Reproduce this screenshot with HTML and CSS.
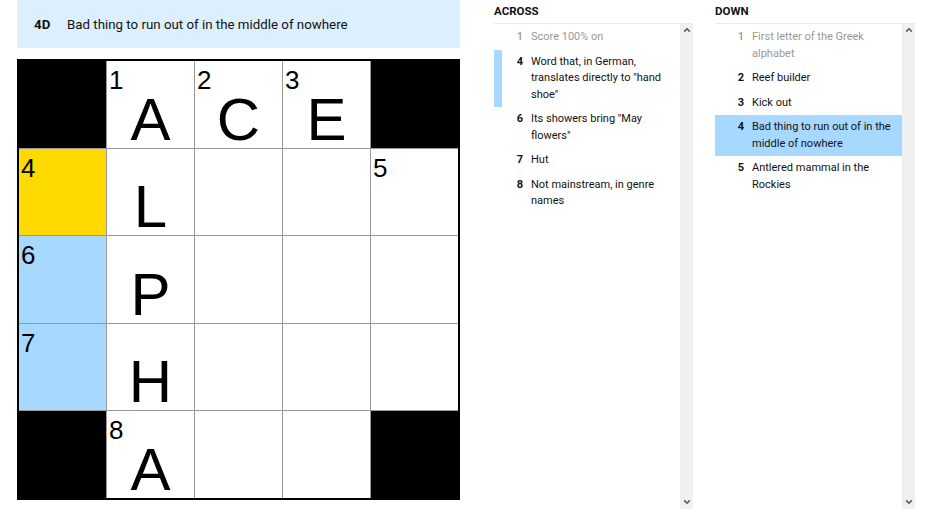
FILE: index.html
```html
<!DOCTYPE html>
<html>
<head>
<meta charset="utf-8">
<link rel="stylesheet" href="styles.css">
</head>
<body>
<div class="page">
  <div class="board">
    <div class="clue-bar">
      <span class="clue-bar-num">4D</span>
      <span class="clue-bar-text">Bad thing to run out of in the middle of nowhere</span>
    </div>
    <div class="grid">
      <div class="cell block"></div>
      <div class="cell"><span class="num">1</span><span class="letter">A</span></div>
      <div class="cell"><span class="num">2</span><span class="letter">C</span></div>
      <div class="cell"><span class="num">3</span><span class="letter">E</span></div>
      <div class="cell block"></div>

      <div class="cell selected"><span class="num">4</span></div>
      <div class="cell"><span class="letter">L</span></div>
      <div class="cell"></div>
      <div class="cell"></div>
      <div class="cell"><span class="num">5</span></div>

      <div class="cell word"><span class="num">6</span></div>
      <div class="cell"><span class="letter">P</span></div>
      <div class="cell"></div>
      <div class="cell"></div>
      <div class="cell"></div>

      <div class="cell word"><span class="num">7</span></div>
      <div class="cell"><span class="letter">H</span></div>
      <div class="cell"></div>
      <div class="cell"></div>
      <div class="cell"></div>

      <div class="cell block"></div>
      <div class="cell"><span class="num">8</span><span class="letter">A</span></div>
      <div class="cell"></div>
      <div class="cell"></div>
      <div class="cell block"></div>
    </div>
  </div>

  <div class="clues across">
    <div class="clues-title">ACROSS</div>
    <div class="clue-box">
      <ol class="clue-list">
        <li class="clue done"><span class="clue-num">1</span><span class="clue-text">Score 100% on</span></li>
        <li class="clue cross"><span class="clue-num">4</span><span class="clue-text">Word that, in German, translates directly to "hand shoe"</span></li>
        <li class="clue"><span class="clue-num">6</span><span class="clue-text">Its showers bring "May flowers"</span></li>
        <li class="clue"><span class="clue-num">7</span><span class="clue-text">Hut</span></li>
        <li class="clue"><span class="clue-num">8</span><span class="clue-text">Not mainstream, in genre names</span></li>
      </ol>
      <div class="scrollbar">
        <svg class="chev" width="8" height="6" viewBox="0 0 8 6"><path d="M1.2 4.6 L4 1.8 L6.8 4.6" fill="none" stroke="#5a5a5a" stroke-width="1.6"/></svg>
        <svg class="chev" width="8" height="6" viewBox="0 0 8 6"><path d="M1.2 1.4 L4 4.2 L6.8 1.4" fill="none" stroke="#5a5a5a" stroke-width="1.6"/></svg>
      </div>
    </div>
  </div>

  <div class="clues down">
    <div class="clues-title">DOWN</div>
    <div class="clue-box">
      <ol class="clue-list">
        <li class="clue done"><span class="clue-num">1</span><span class="clue-text">First letter of the Greek alphabet</span></li>
        <li class="clue"><span class="clue-num">2</span><span class="clue-text">Reef builder</span></li>
        <li class="clue"><span class="clue-num">3</span><span class="clue-text">Kick out</span></li>
        <li class="clue active"><span class="clue-num">4</span><span class="clue-text">Bad thing to run out of in the middle of nowhere</span></li>
        <li class="clue"><span class="clue-num">5</span><span class="clue-text">Antlered mammal in the Rockies</span></li>
      </ol>
      <div class="scrollbar">
        <svg class="chev" width="8" height="6" viewBox="0 0 8 6"><path d="M1.2 4.6 L4 1.8 L6.8 4.6" fill="none" stroke="#5a5a5a" stroke-width="1.6"/></svg>
        <svg class="chev" width="8" height="6" viewBox="0 0 8 6"><path d="M1.2 1.4 L4 4.2 L6.8 1.4" fill="none" stroke="#5a5a5a" stroke-width="1.6"/></svg>
      </div>
    </div>
  </div>
</div>
</body>
</html>
```

FILE: styles.css
```css
html, body {
  margin: 0;
  padding: 0;
  background: #ffffff;
}

body {
  font-family: Roboto, "Liberation Sans", Arial, sans-serif;
  color: #121212;
  width: 940px;
  height: 529px;
  overflow: hidden;
}

.page {
  display: flex;
  align-items: flex-start;
  padding-left: 17px;
}

/* ---------- board ---------- */
.board {
  width: 443px;
  display: flex;
  flex-direction: column;
}

.clue-bar {
  height: 48px;
  background: #dcefff;
  display: flex;
  align-items: center;
  padding-left: 17px;
  padding-top: 1px;
  box-sizing: border-box;
  margin-bottom: 11px;
  font-size: 13.3px;
}

.clue-bar-num {
  font-weight: 700;
  width: 33px;
}

.clue-bar-text {
  font-weight: 400;
}

.grid {
  display: grid;
  grid-template-columns: repeat(5, 87px);
  grid-template-rows: repeat(5, 86.5px);
  gap: 1px;
  background: #999999;
  border: 2px solid #000000;
  width: max-content;
  font-family: "Liberation Sans", Arial, sans-serif;
}

.cell {
  position: relative;
  background: #ffffff;
  display: flex;
  align-items: flex-end;
  justify-content: center;
}

.cell.block {
  background: #000000;
}

.cell.selected {
  background: #ffda00;
}

.cell.word {
  background: #a7d8ff;
}

.num {
  position: absolute;
  top: 6px;
  left: 2px;
  font-size: 26px;
  line-height: 26px;
  color: #000000;
}

.letter {
  font-size: 60px;
  line-height: 56px;
  color: #000000;
}

/* ---------- clue lists ---------- */
.clues {
  display: flex;
  flex-direction: column;
}

.clues.across {
  width: 199px;
  margin-left: 34px;
}

.clues.down {
  width: 200px;
  margin-left: 22px;
}

.clues-title {
  height: 23px;
  line-height: 22px;
  font-size: 11.5px;
  font-weight: 700;
  color: #121212;
}

.clue-box {
  height: 485px;
  border-top: 1px solid #ececec;
  display: flex;
}

.clue-list {
  list-style: none;
  margin: 0;
  padding: 1px 0 0;
  flex: 1;
}

.clue {
  display: flex;
  border-left: 8px solid transparent;
  padding: 4px 4px 4px 0;
  font-size: 11px;
  line-height: 16.5px;
}

.clue-num {
  width: 21px;
  flex: none;
  text-align: right;
  font-weight: 700;
  margin-right: 8px;
}

.clue-text {
  flex: 1;
}

.clue.done {
  color: #999999;
}

.clue.done .clue-num {
  font-weight: 500;
}

.clue.cross {
  border-left-color: #a7d8ff;
}

.clue.active {
  background: #a7d8ff;
}

.scrollbar {
  width: 13px;
  flex: none;
  background: #f0f0f0;
  display: flex;
  flex-direction: column;
  justify-content: space-between;
  align-items: center;
  padding: 3px 0 4px;
}

.chev {
  display: block;
}
```
